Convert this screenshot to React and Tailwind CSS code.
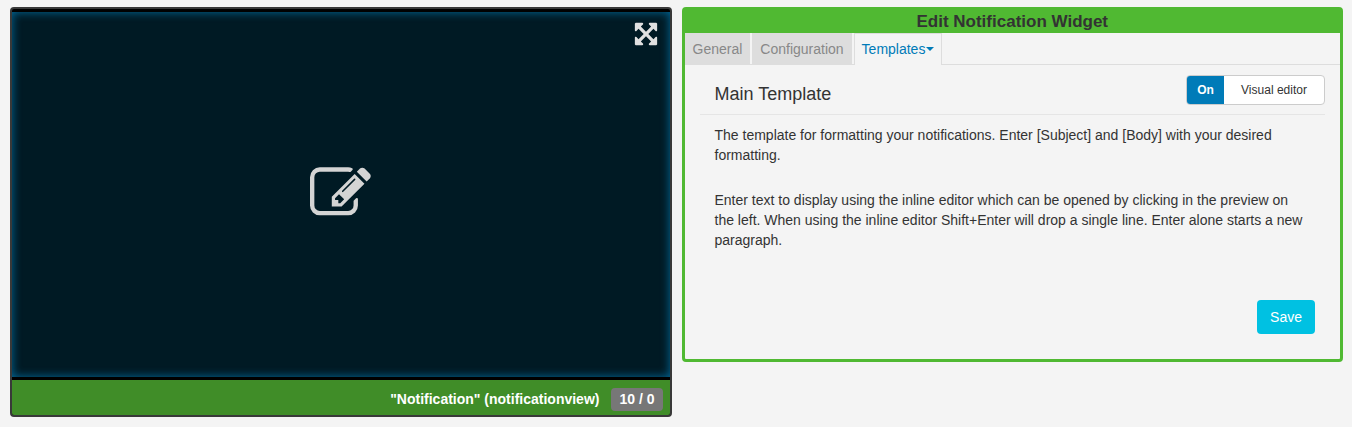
import { useState } from "react";

function ExpandIcon() {
  return (
    <svg viewBox="0 0 1792 1792" className="size-[26px]" fill="currentColor" aria-hidden="true">
      <path d="M1411 541l-355 355 355 355 144-144q29-31 70-14 39 17 39 59v448q0 26-19 45t-45 19h-448q-42 0-59-40-17-39 14-69l144-144-355-355-355 355 144 144q31 30 14 69-17 40-59 40h-448q-26 0-45-19t-19-45v-448q0-42 40-59 39-17 69 14l144 144 355-355-355-355-144 144q-19 19-45 19-12 0-24-5-40-17-40-59v-448q0-26 19-45t45-19h448q42 0 59 40 17 39-14 69l-144 144 355 355 355-355-144-144q-31-30-14-69 17-40 59-40h448q26 0 45 19t19 45v448q0 42-39 59-13 5-25 5-26 0-45-19z" />
    </svg>
  );
}

function EditIcon() {
  return (
    <svg viewBox="0 0 1792 1792" className="size-[61px]" fill="currentColor" aria-hidden="true">
      <path d="M888 1184l116-116-152-152-116 116v56h96v96h56zm440-720q-16-16-33 1l-350 350q-17 17-1 33t33-1l350-350q17-17 1-33zm80 594v190q0 119-84.5 203.5t-203.5 84.5h-832q-119 0-203.5-84.5t-84.5-203.5v-832q0-119 84.5-203.5t203.5-84.5h832q63 0 117 25 15 7 18 23 3 17-9 29l-49 49q-14 14-32 8-23-6-45-6h-832q-66 0-113 47t-47 113v832q0 66 47 113t113 47h832q66 0 113-47t47-113v-126q0-13 9-22l64-64q15-15 35-7t20 29zm-96-738l288 288-672 672h-288v-288zm444 132l-92 92-288-288 92-92q28-28 68-28t68 28l152 152q28 28 28 68t-28 68z" />
    </svg>
  );
}

function Preview() {
  return (
    <section className="overflow-hidden rounded border-2 border-[#393939] bg-black pt-[3px]">
      <div className="relative flex h-[365px] items-center justify-center bg-[#001a24] pb-[2px] text-[#d4d4d4] shadow-[inset_0_0_10px_#006a9c]">
        <button type="button" aria-label="Edit content">
          <EditIcon />
        </button>
        <button type="button" aria-label="Full screen" className="absolute top-[9px] right-[11px] text-[#e0e0e0]">
          <ExpandIcon />
        </button>
      </div>
      <footer className="mt-[3px] flex h-[35px] items-center justify-end gap-3 bg-[#408d28] pt-[3px] pr-[7px] text-sm font-bold text-white">
        <span>"Notification" (notificationview)</span>
        <span className="rounded bg-[#777] px-2 py-[2px] leading-[19px]">10 / 0</span>
      </footer>
    </section>
  );
}

const inactiveTab = "bg-[#ddd] px-2 text-[#888]";

function EditForm() {
  const [visual, setVisual] = useState(true);
  return (
    <section className="rounded border-[3px] border-[#50b932]">
      <h1 className="h-[23px] bg-[#50b932] text-center text-[17px] leading-[23px] font-bold">Edit Notification Widget</h1>
      <nav className="flex h-8 gap-[2px] border-b border-[#ddd] text-sm leading-8">
        <button type="button" className={inactiveTab}>General</button>
        <button type="button" className={inactiveTab}>Configuration</button>
        <button
          type="button"
          className="-mb-px flex items-center gap-px border border-b-0 border-[#ddd] bg-[#f4f4f4] px-[7px] pb-px leading-[30px] text-[#007bb8]"
        >
          Templates
          <svg viewBox="0 0 8 4" className="h-1 w-2" fill="currentColor" aria-hidden="true">
            <path d="M0 0h8L4 4z" />
          </svg>
        </button>
      </nav>
      <form className="px-[15px] pt-[10px] pb-[25px]" onSubmit={(e) => e.preventDefault()}>
        <div className="flex items-start justify-between border-b border-[#e5e5e5] pb-[9px] pl-[15px]">
          <h2 className="pt-[9px] text-lg leading-5">Main Template</h2>
          <label className="flex h-[30px] cursor-pointer overflow-hidden rounded border border-[#ccc] bg-white text-xs leading-7">
            <input
              type="checkbox"
              className="sr-only"
              checked={visual}
              onChange={(e) => setVisual(e.target.checked)}
            />
            <span className="w-[37px] bg-[#007bb8] text-center font-bold text-white">{visual ? "On" : "Off"}</span>
            <span className="w-[100px] text-center">Visual editor</span>
          </label>
        </div>
        <div className="px-[15px] pt-[10px] text-sm leading-5">
          <p>The template for formatting your notifications. Enter [Subject] and [Body] with your desired formatting.</p>
          <p className="mt-[25px]">
            Enter text to display using the inline editor which can be opened by clicking in the preview on the left. When
            using the inline editor Shift+Enter will drop a single line. Enter alone starts a new paragraph.
          </p>
        </div>
        <div className="mt-[50px] flex justify-end pr-[10px]">
          <button type="submit" className="h-[34px] rounded bg-[#00c1e2] px-[13px] text-sm text-white">Save</button>
        </div>
      </form>
    </section>
  );
}

export default function App() {
  return (
    <main className="grid min-h-screen grid-cols-2 items-start gap-[10px] bg-[#f4f4f4] pt-[7px] pr-[9px] pb-[10px] pl-[10px] font-['Liberation_Sans',Arial,sans-serif] text-[#333]">
      <Preview />
      <EditForm />
    </main>
  );
}
